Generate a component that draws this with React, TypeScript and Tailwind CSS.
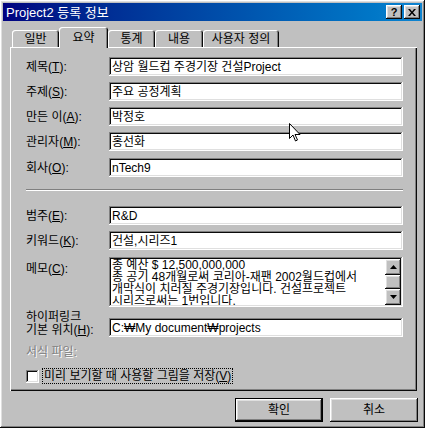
import type { ReactNode } from "react";

const raised =
  "bg-[#c0c0c0] shadow-[inset_-1px_-1px_#0a0a0a,inset_1px_1px_#fff,inset_-2px_-2px_#808080,inset_2px_2px_#dfdfdf]";
const sunken =
  "bg-white shadow-[inset_-1px_-1px_#fff,inset_1px_1px_#808080,inset_-2px_-2px_#dfdfdf,inset_2px_2px_#0a0a0a]";

function Label({ text, u, after }: { text: string; u: string; after?: string }) {
  return (
    <span className="whitespace-nowrap">
      {text}(<u>{u}</u>){after ?? ":"}
    </span>
  );
}

function Row({ label, value, top }: { label: ReactNode; value: string; top: string }) {
  return (
    <div className={`flex items-center ${top}`}>
      <div className="w-[83px] shrink-0">{label}</div>
      <div className={`flex h-[19px] flex-1 items-center pl-[3px] ${sunken}`}>
        <span className="whitespace-nowrap leading-none">{value}</span>
      </div>
    </div>
  );
}

function Arrow({ down }: { down?: boolean }) {
  return (
    <div className={`flex h-[16px] w-[16px] items-center justify-center ${raised}`}>
      <svg width="7" height="4" viewBox="0 0 7 4">
        <path d={down ? "M0 0h7L3.5 4z" : "M3.5 0L7 4H0z"} fill="#000" />
      </svg>
    </div>
  );
}

const tabs = [
  { name: "일반", w: "w-[47px]" },
  { name: "요약", w: "w-[49px]", active: true },
  { name: "통계", w: "w-[47px]" },
  { name: "내용", w: "w-[48px]" },
  { name: "사용자 정의", w: "w-[76px]" },
];

export default function App() {
  return (
    <div
      className={`relative flex h-[428px] w-[425px] flex-col p-[3px] text-[12px] text-black font-['Liberation_Sans','Noto_Sans_CJK_KR',sans-serif] ${raised}`}
    >
      {/* title bar */}
      <div className="flex h-[18px] items-center justify-between bg-linear-to-r from-[#000080] to-[#1084d0] pl-[3px] pr-[2px]">
        <span className="text-[13px] leading-none text-white">Project2 등록 정보</span>
        <div className="flex gap-[2px]">
          <div className={`flex h-[14px] w-[16px] items-center justify-center text-[11px] font-bold leading-none ${raised}`}>
            ?
          </div>
          <div className={`flex h-[14px] w-[16px] items-center justify-center ${raised}`}>
            <svg width="8" height="7" viewBox="0 0 8 7">
              <path d="M0 0h2l2 2.5L6 0h2L5 3.5 8 7H6L4 4.5 2 7H0l3-3.5z" fill="#000" />
            </svg>
          </div>
        </div>
      </div>

      {/* tabs */}
      <div className="ml-[9px] mt-[6px] flex h-[20px] items-end">
        {tabs.map((t) =>
          t.active ? (
            <div
              key={t.name}
              className={`relative z-10 -mb-px flex h-[21px] ${t.w} items-start justify-center rounded-t-[3px] bg-[#c0c0c0] pt-[2px] shadow-[inset_1px_1px_#fff,inset_-1px_0_#0a0a0a,inset_-2px_0_#808080]`}
            >
              {t.name}
            </div>
          ) : (
            <div
              key={t.name}
              className={`flex h-[17px] ${t.w} items-center justify-center rounded-t-[3px] bg-[#c0c0c0] shadow-[inset_1px_1px_#fff,inset_-1px_0_#0a0a0a,inset_-2px_0_#808080]`}
            >
              {t.name}
            </div>
          ),
        )}
      </div>

      {/* panel */}
      <div className="ml-[7px] mr-[5px] flex h-[344px] flex-col pl-[16px] pr-[14px] pt-[10px] shadow-[inset_1px_1px_#fff,inset_-1px_-1px_#0a0a0a,inset_-2px_-2px_#808080]">
        <Row top="" label={<Label text="제목" u="T" />} value="상암 월드컵 주경기장 건설Project" />
        <Row top="mt-[6px]" label={<Label text="주제" u="S" />} value="주요 공정계획" />
        <Row top="mt-[6px]" label={<Label text="만든 이" u="A" />} value="박정호" />
        <Row top="mt-[6px]" label={<Label text="관리자" u="M" />} value="홍선화" />
        <Row top="mt-[7px]" label={<Label text="회사" u="O" />} value="nTech9" />

        <div className="mt-[12px] h-[2px] border-t border-b border-t-[#808080] border-b-white" />

        <Row top="mt-[15px]" label={<Label text="범주" u="E" />} value="R&D" />
        <Row top="mt-[6px]" label={<Label text="키워드" u="K" />} value="건설,시리즈1" />

        <div className="mt-[7px] flex">
          <div className="w-[83px] shrink-0 pt-[3px]">
            <Label text="메모" u="C" />
          </div>
          <div className={`flex h-[50px] flex-1 p-[2px] ${sunken}`}>
            <div className="flex-1 overflow-hidden pl-[1px] text-[12px] leading-[12px] whitespace-nowrap">
              <div>총 예산 $ 12,500,000,000</div>
              <div>총 공기 48개월로써 코리아-재팬 2002월드컵에서</div>
              <div>개막식이 치러질 주경기장입니다. 건설프로젝트</div>
              <div>시리즈로써는 1번입니다.</div>
            </div>
            <div className="flex w-[16px] flex-col">
              <Arrow />
              <div className={`h-[14px] w-[16px] ${raised}`} />
              <Arrow down />
            </div>
          </div>
        </div>

        <div className="mt-[4px] flex items-end">
          <div className="w-[83px] shrink-0 leading-[13px]">
            <div>하이퍼링크</div>
            <div className="whitespace-nowrap">
              기본 위치(<u>H</u>):
            </div>
          </div>
          <div className={`flex h-[19px] flex-1 items-center pl-[3px] ${sunken}`}>
            <span className="whitespace-nowrap leading-none">C:₩My document₩projects</span>
          </div>
        </div>

        <div className="mt-[8px] leading-[14px] text-[#808080] [text-shadow:1px_1px_#fff]">서식 파일:</div>

        <div className="mt-[9px] flex items-center gap-[3px]">
          <div className={`h-[13px] w-[13px] ${sunken}`} />
          <div className="border border-dotted border-black px-[1px] leading-[14px]">
            미리 보기할 때 사용할 그림을 저장(<u>V</u>)
          </div>
        </div>
      </div>

      {/* buttons */}
      <div className="mr-[4px] mt-[7px] flex justify-end gap-[7px]">
        <div className="border border-black">
          <div className={`flex h-[22px] w-[86px] items-center justify-center ${raised}`}>확인</div>
        </div>
        <div className={`flex h-[24px] w-[88px] items-center justify-center ${raised}`}>취소</div>
      </div>

      {/* mouse pointer */}
      <svg className="absolute left-[289px] top-[123px]" width="12" height="20" viewBox="0 0 12 20">
        <path d="M0.5 0.5v15l3.5-3.5 2.5 6 2-1-2.5-5.5h5z" fill="#fff" stroke="#000" strokeWidth="1" />
      </svg>
    </div>
  );
}
